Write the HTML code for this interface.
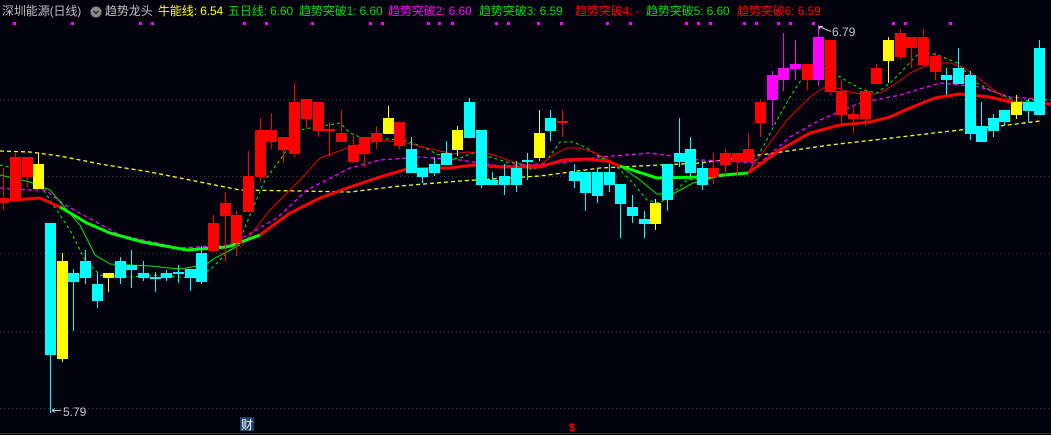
<!DOCTYPE html>
<html><head><meta charset="utf-8"><style>
html,body{margin:0;padding:0;background:#02020e;}
body{width:1051px;height:435px;overflow:hidden;position:relative;font-family:"Liberation Sans","Noto Sans CJK SC",sans-serif;}
.hd{position:absolute;top:4px;font-size:12px;white-space:nowrap;line-height:15px;letter-spacing:-0.1px;}
</style></head><body>
<svg width="1051" height="435" style="position:absolute;left:0;top:0">
<g stroke="#3a3a44" stroke-width="1" stroke-dasharray="1,3">
<line x1="0" y1="99.5" x2="1051" y2="99.5"/><line x1="0" y1="176.5" x2="1051" y2="176.5"/><line x1="0" y1="253.5" x2="1051" y2="253.5"/><line x1="0" y1="331.5" x2="1051" y2="331.5"/><line x1="0" y1="408.5" x2="1051" y2="408.5"/>
</g>
<line x1="0" y1="433.5" x2="1051" y2="433.5" stroke="#333" stroke-width="1"/>
<polyline fill="none" stroke="#ffff00" stroke-width="1.3" stroke-dasharray="4,3" points="0,151 30,152 60,156 100,164 150,172 180,178 240,190 300,191 350,192 400,186 460,181 540,176 600,168 680,164 700,163 760,155 830,145 900,137 960,130 1000,126 1040,121"/>
<polyline fill="none" stroke="#ff00ff" stroke-width="1.3" stroke-dasharray="4,3" points="0,188 30,190 45,190 65,205 120,235 180,248 230,245 277,218 307,190 350,168 380,160 420,157 460,160 500,166 560,163 600,157 650,153 700,160 760,163 790,137 820,120 860,103 900,95 940,83 980,87 1010,97 1051,100"/>
<polyline fill="none" stroke="#00ff00" stroke-width="1" stroke-dasharray="3,3" points="0,165 30,172 40,185 50,200 70,230 85,260 100,275 130,277 160,275 190,278 210,270 220,260 240,240 250,215 265,180 280,160 300,130 310,128 340,123 350,133 360,137 373,139 390,139 407,141 423,147 437,154 450,159 460,158 473,153 490,157 507,162 520,164 533,170 547,160 560,142 573,142 587,148 600,157 613,163 633,183 647,200 660,203 673,193 687,180 710,178 748,173 763,147 777,120 790,97 803,77 817,67 830,70 837,75 850,83 863,90 877,93 890,83 903,70 917,55 930,53 943,57 957,63 977,83 990,90 1003,95 1017,102 1030,100 1051,100"/>
<polyline fill="none" stroke="#00ee00" stroke-width="1" points="0,175 30,182 50,190 80,225 95,255 110,264 150,266 180,269 205,265 215,258 240,245"/>
<polyline fill="none" stroke="#ee0000" stroke-width="1" points="240,248 270,210 300,180 320,158 350,147 380,140 407,143 427,148 440,151 453,154 467,152 487,153 500,157 513,162 527,165 540,165 553,155 567,148 580,148 593,152 607,159 620,166"/>
<polyline fill="none" stroke="#00ee00" stroke-width="1" points="620,166 640,180 657,194 673,194 693,183 720,176 748,172"/>
<polyline fill="none" stroke="#ee0000" stroke-width="1" points="748,172 767,147 787,120 810,97 823,88 837,88 850,92 867,95 880,93 897,83 910,73 923,67 937,63 950,63 963,67 977,77 990,87 1003,97 1017,103 1030,102 1051,104"/>
<polyline fill="none" stroke="#ff0000" stroke-width="3" points="0,201 40,198 60,207"/>
<polyline fill="none" stroke="#00ff00" stroke-width="3" points="60,207 87,223 110,233 143,242 187,250 227,247 260,235"/>
<polyline fill="none" stroke="#ff0000" stroke-width="3" points="260,235 290,213 320,198 350,187 380,177 407,169 450,168 473,165 500,167 540,167 563,160 587,159 607,161 620,166"/>
<polyline fill="none" stroke="#00ff00" stroke-width="3" points="620,166 657,178 700,177 748,173"/>
<polyline fill="none" stroke="#ff0000" stroke-width="3" points="748,173 780,150 810,133 840,125 870,122 890,117 910,108 935,98 960,94 990,97 1010,102 1025,103 1051,104"/>
<g fill="#ff0000">
<rect x="3" y="168" width="1" height="42"/><rect x="-2" y="198" width="11" height="5"/>
<rect x="15" y="153" width="1" height="47"/><rect x="10" y="157" width="11" height="43"/>
<rect x="27" y="157" width="1" height="30"/><rect x="22" y="157" width="11" height="20"/>
<rect x="213" y="215" width="1" height="36"/><rect x="208" y="223" width="11" height="28"/>
<rect x="225" y="192" width="1" height="70"/><rect x="220" y="203" width="11" height="13"/>
<rect x="236" y="211" width="1" height="45"/><rect x="231" y="215" width="11" height="28"/>
<rect x="248" y="151" width="1" height="61"/><rect x="243" y="176" width="11" height="36"/>
<rect x="260" y="118" width="1" height="64"/><rect x="255" y="130" width="11" height="47"/>
<rect x="271" y="113" width="1" height="36"/><rect x="266" y="130" width="11" height="12"/>
<rect x="283" y="137" width="1" height="26"/><rect x="278" y="137" width="11" height="13"/>
<rect x="294" y="83" width="1" height="74"/><rect x="289" y="102" width="11" height="52"/>
<rect x="306" y="99" width="1" height="30"/><rect x="301" y="99" width="11" height="20"/>
<rect x="318" y="102" width="1" height="35"/><rect x="313" y="102" width="11" height="29"/>
<rect x="329" y="122" width="1" height="35"/><rect x="324" y="129" width="11" height="2"/>
<rect x="341" y="110" width="1" height="32"/><rect x="336" y="133" width="11" height="9"/>
<rect x="353" y="133" width="1" height="30"/><rect x="348" y="145" width="11" height="17"/>
<rect x="364" y="137" width="1" height="30"/><rect x="359" y="137" width="11" height="17"/>
<rect x="376" y="126" width="1" height="23"/><rect x="371" y="133" width="11" height="9"/>
<rect x="399" y="122" width="1" height="27"/><rect x="394" y="122" width="11" height="24"/>
<rect x="562" y="110" width="1" height="27"/><rect x="557" y="121" width="11" height="2"/>
<rect x="713" y="153" width="1" height="31"/><rect x="708" y="168" width="11" height="9"/>
<rect x="725" y="149" width="1" height="26"/><rect x="720" y="153" width="11" height="12"/>
<rect x="737" y="153" width="1" height="22"/><rect x="732" y="153" width="11" height="9"/>
<rect x="748" y="133" width="1" height="29"/><rect x="743" y="149" width="11" height="13"/>
<rect x="760" y="99" width="1" height="38"/><rect x="755" y="102" width="11" height="21"/>
<rect x="807" y="64" width="1" height="27"/><rect x="802" y="64" width="11" height="16"/>
<rect x="830" y="40" width="1" height="55"/><rect x="825" y="40" width="11" height="52"/>
<rect x="841" y="79" width="1" height="45"/><rect x="836" y="91" width="11" height="24"/>
<rect x="853" y="106" width="1" height="27"/><rect x="848" y="114" width="11" height="5"/>
<rect x="865" y="88" width="1" height="38"/><rect x="860" y="91" width="11" height="28"/>
<rect x="876" y="64" width="1" height="20"/><rect x="871" y="68" width="11" height="16"/>
<rect x="900" y="29" width="1" height="31"/><rect x="895" y="33" width="11" height="24"/>
<rect x="911" y="37" width="1" height="31"/><rect x="906" y="37" width="11" height="11"/>
<rect x="923" y="29" width="1" height="36"/><rect x="918" y="37" width="11" height="28"/>
<rect x="935" y="52" width="1" height="28"/><rect x="930" y="56" width="11" height="16"/>
</g>
<g fill="#00ffff">
<rect x="50" y="223" width="1" height="190"/><rect x="45" y="223" width="11" height="132"/>
<rect x="73" y="269" width="1" height="62"/><rect x="68" y="273" width="11" height="9"/>
<rect x="85" y="250" width="1" height="34"/><rect x="80" y="261" width="11" height="17"/>
<rect x="97" y="273" width="1" height="35"/><rect x="92" y="284" width="11" height="17"/>
<rect x="120" y="257" width="1" height="27"/><rect x="115" y="261" width="11" height="17"/>
<rect x="131" y="250" width="1" height="38"/><rect x="126" y="265" width="11" height="5"/>
<rect x="143" y="261" width="1" height="20"/><rect x="138" y="273" width="11" height="5"/>
<rect x="155" y="272" width="1" height="20"/><rect x="150" y="277" width="11" height="2"/>
<rect x="166" y="270" width="1" height="11"/><rect x="161" y="273" width="11" height="5"/>
<rect x="178" y="265" width="1" height="18"/><rect x="173" y="272" width="11" height="2"/>
<rect x="190" y="269" width="1" height="22"/><rect x="185" y="269" width="11" height="9"/>
<rect x="201" y="246" width="1" height="38"/><rect x="196" y="253" width="11" height="29"/>
<rect x="411" y="137" width="1" height="36"/><rect x="406" y="149" width="11" height="24"/>
<rect x="422" y="168" width="1" height="15"/><rect x="417" y="168" width="11" height="9"/>
<rect x="434" y="157" width="1" height="19"/><rect x="429" y="164" width="11" height="9"/>
<rect x="446" y="141" width="1" height="24"/><rect x="441" y="153" width="11" height="12"/>
<rect x="469" y="98" width="1" height="40"/><rect x="464" y="102" width="11" height="36"/>
<rect x="481" y="130" width="1" height="58"/><rect x="476" y="130" width="11" height="55"/>
<rect x="492" y="172" width="1" height="13"/><rect x="487" y="180" width="11" height="5"/>
<rect x="504" y="164" width="1" height="31"/><rect x="499" y="176" width="11" height="9"/>
<rect x="516" y="161" width="1" height="31"/><rect x="511" y="168" width="11" height="17"/>
<rect x="527" y="153" width="1" height="27"/><rect x="522" y="160" width="11" height="2"/>
<rect x="550" y="110" width="1" height="31"/><rect x="545" y="118" width="11" height="13"/>
<rect x="574" y="164" width="1" height="24"/><rect x="569" y="172" width="11" height="9"/>
<rect x="585" y="172" width="1" height="39"/><rect x="580" y="172" width="11" height="21"/>
<rect x="597" y="168" width="1" height="35"/><rect x="592" y="172" width="11" height="24"/>
<rect x="609" y="164" width="1" height="28"/><rect x="604" y="172" width="11" height="13"/>
<rect x="620" y="184" width="1" height="54"/><rect x="615" y="184" width="11" height="20"/>
<rect x="632" y="195" width="1" height="28"/><rect x="627" y="207" width="11" height="9"/>
<rect x="644" y="211" width="1" height="27"/><rect x="639" y="219" width="11" height="5"/>
<rect x="667" y="164" width="1" height="47"/><rect x="662" y="164" width="11" height="36"/>
<rect x="679" y="118" width="1" height="49"/><rect x="674" y="153" width="11" height="9"/>
<rect x="690" y="137" width="1" height="40"/><rect x="685" y="149" width="11" height="24"/>
<rect x="702" y="161" width="1" height="29"/><rect x="697" y="168" width="11" height="17"/>
<rect x="946" y="68" width="1" height="27"/><rect x="941" y="75" width="11" height="5"/>
<rect x="958" y="48" width="1" height="36"/><rect x="953" y="68" width="11" height="16"/>
<rect x="970" y="71" width="1" height="69"/><rect x="965" y="75" width="11" height="59"/>
<rect x="981" y="102" width="1" height="40"/><rect x="976" y="126" width="11" height="16"/>
<rect x="993" y="114" width="1" height="23"/><rect x="988" y="118" width="11" height="13"/>
<rect x="1004" y="110" width="1" height="16"/><rect x="999" y="110" width="11" height="12"/>
<rect x="1028" y="99" width="1" height="23"/><rect x="1023" y="102" width="11" height="9"/>
<rect x="1039" y="40" width="1" height="75"/><rect x="1034" y="48" width="11" height="67"/>
</g>
<g fill="#ffff00">
<rect x="38" y="153" width="1" height="36"/><rect x="33" y="164" width="11" height="25"/>
<rect x="62" y="253" width="1" height="109"/><rect x="57" y="261" width="11" height="98"/>
<rect x="108" y="273" width="1" height="19"/><rect x="103" y="273" width="11" height="5"/>
<rect x="388" y="106" width="1" height="28"/><rect x="383" y="118" width="11" height="16"/>
<rect x="457" y="126" width="1" height="30"/><rect x="452" y="130" width="11" height="20"/>
<rect x="539" y="110" width="1" height="51"/><rect x="534" y="133" width="11" height="25"/>
<rect x="655" y="199" width="1" height="31"/><rect x="650" y="203" width="11" height="21"/>
<rect x="888" y="37" width="1" height="46"/><rect x="883" y="40" width="11" height="21"/>
<rect x="1016" y="95" width="1" height="24"/><rect x="1011" y="102" width="11" height="13"/>
</g>
<g fill="#ff00ff">
<rect x="772" y="71" width="1" height="55"/><rect x="767" y="75" width="11" height="25"/>
<rect x="783" y="33" width="1" height="58"/><rect x="778" y="68" width="11" height="12"/>
<rect x="795" y="40" width="1" height="40"/><rect x="790" y="64" width="11" height="5"/>
<rect x="818" y="25" width="1" height="61"/><rect x="813" y="37" width="11" height="43"/>
</g>
<g fill="#ff00ff">
<rect x="13" y="22" width="3" height="3"/><rect x="71" y="22" width="3" height="3"/><rect x="139" y="22" width="3" height="3"/><rect x="151" y="22" width="3" height="3"/><rect x="243" y="22" width="3" height="3"/><rect x="265" y="22" width="3" height="3"/><rect x="311" y="22" width="3" height="3"/><rect x="369" y="22" width="3" height="3"/><rect x="381" y="22" width="3" height="3"/><rect x="427" y="22" width="3" height="3"/><rect x="438" y="22" width="3" height="3"/><rect x="451" y="22" width="3" height="3"/><rect x="495" y="22" width="3" height="3"/><rect x="507" y="22" width="3" height="3"/><rect x="537" y="22" width="3" height="3"/><rect x="560" y="22" width="3" height="3"/><rect x="606" y="22" width="3" height="3"/><rect x="629" y="22" width="3" height="3"/><rect x="685" y="22" width="3" height="3"/><rect x="697" y="22" width="3" height="3"/><rect x="709" y="22" width="3" height="3"/><rect x="743" y="22" width="3" height="3"/><rect x="755" y="22" width="3" height="3"/><rect x="777" y="22" width="3" height="3"/><rect x="789" y="22" width="3" height="3"/><rect x="812" y="22" width="3" height="3"/><rect x="892" y="22" width="3" height="3"/><rect x="904" y="22" width="3" height="3"/><rect x="949" y="22" width="3" height="3"/>
</g>
<g stroke="#c8c8c8" fill="none" stroke-width="1">
<path d="M52 410.5 H61 M52 410.5 l3 -2 M52 410.5 l3 2"/>
<path d="M819 26.5 l12 5 M819 26.5 l4 0 M819 26.5 l1 3"/>
</g>
<text x="63" y="416" fill="#c8c8c8" font-size="12" font-family="Liberation Sans, sans-serif">5.79</text>
<text x="832" y="36" fill="#c8c8c8" font-size="12" font-family="Liberation Sans, sans-serif">6.79</text>
<rect x="240" y="417" width="14" height="14" fill="#1c3f6e"/>
<text x="241" y="429" fill="#ffffff" font-size="12" font-family="Noto Sans CJK SC, sans-serif">财</text>
<text x="569" y="431" fill="#ff0000" font-size="11" font-weight="bold" font-family="Liberation Sans, sans-serif">$</text>
<circle cx="96" cy="12" r="5.5" fill="#8a8a8a"/>
<path d="M93.5 11 l2.5 2.5 l2.5 -2.5" stroke="#222" stroke-width="1.3" fill="none"/>
</svg>
<div class="hd" style="left:2px;color:#c0c0c0">深圳能源(日线)</div>
<div class="hd" style="left:105px;color:#c0c0c0">趋势龙头</div>
<div class="hd" style="left:158px;color:#ffff00">牛能线: 6.54</div>
<div class="hd" style="left:228px;color:#00e000">五日线: 6.60</div>
<div class="hd" style="left:299px;color:#00e000">趋势突破1: 6.60</div>
<div class="hd" style="left:388px;color:#ff00ff">趋势突破2: 6.60</div>
<div class="hd" style="left:479px;color:#00e000">趋势突破3: 6.59</div>
<div class="hd" style="left:575px;color:#ff0000">趋势突破4: -</div>
<div class="hd" style="left:646px;color:#00e000">趋势突破5: 6.60</div>
<div class="hd" style="left:737px;color:#ff0000">趋势突破6: 6.59</div>
</body></html>
